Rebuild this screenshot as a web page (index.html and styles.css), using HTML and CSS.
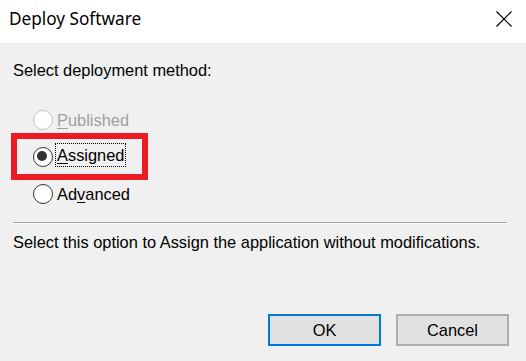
FILE: index.html
```html
<!DOCTYPE html>
<html lang="en">
<head>
<meta charset="utf-8">
<title>Deploy Software</title>
<link rel="stylesheet" href="styles.css">
</head>
<body>
<div class="dialog">
  <header class="titlebar">
    <span class="title">Deploy Software</span>
    <span class="close" aria-label="Close">
      <svg width="16" height="16" viewBox="0 0 16 16"><path d="M0.5 0.5 L15.5 15.5 M15.5 0.5 L0.5 15.5" stroke="#000" stroke-width="1.2" fill="none"/></svg>
    </span>
  </header>
  <main class="content">
    <p class="label">Select deployment method:</p>
    <div class="options">
      <label class="opt disabled"><span class="radio"></span><span class="text"><u>P</u>ublished</span></label>
      <label class="opt checked"><span class="radio"></span><span class="text focus"><u>A</u>ssigned</span><span class="highlight"></span></label>
      <label class="opt"><span class="radio"></span><span class="text">Ad<u>v</u>anced</span></label>
    </div>
    <div class="sep"></div>
    <p class="desc">Select this option to Assign the application without modifications.</p>
  </main>
  <footer class="buttons">
    <button class="btn default">OK</button>
    <button class="btn">Cancel</button>
  </footer>
</div>
</body>
</html>
```
FILE: styles.css
```css
html, body {
  margin: 0;
  padding: 0;
  background: #f0f0f0;
}
.dialog {
  width: 526px;
  height: 361px;
  display: flex;
  flex-direction: column;
  font-family: "Liberation Sans", Arial, sans-serif;
  font-size: 16.4px;
  color: #000;
  overflow: hidden;
}
.titlebar {
  height: 43px;
  background: #fff;
  display: flex;
  align-items: flex-start;
  justify-content: space-between;
  padding: 0 14px 0 9px;
  box-sizing: border-box;
}
.title {
  font-family: "Noto Sans", "Open Sans", sans-serif;
  font-size: 17.2px;
  line-height: 20px;
  margin-top: 9px;
  color: #000;
}
.close {
  margin-top: 11px;
  display: block;
  width: 16px;
  height: 16px;
}
.close svg { display: block; }
.content {
  padding: 0 19px 0 13px;
}
.label {
  margin: 17px 0 0;
  line-height: 20px;
}
.options {
  margin: 30px 0 0 20px;
  display: flex;
  flex-direction: column;
  gap: 17px;
}
.opt {
  position: relative;
  display: flex;
  align-items: center;
  height: 20px;
  line-height: 20px;
}
.radio {
  width: 20px;
  height: 20px;
  box-sizing: border-box;
  border: 1.6px solid #333;
  border-radius: 50%;
  background: #fff;
  position: relative;
  flex: none;
}
.checked .radio::after {
  content: "";
  position: absolute;
  left: 3.4px;
  top: 3.4px;
  width: 10px;
  height: 10px;
  border-radius: 50%;
  background: #333;
}
.disabled .radio {
  border-color: #c4c4c4;
}
.disabled .text {
  color: #a0a0a0;
}
.text {
  margin-left: 2px;
  padding: 0 1px;
  border: 1px solid transparent;
}
.text u {
  text-underline-offset: 2px;
}
.focus {
  border: 1px dotted #000;
  padding: 1px;
  margin-top: -4px;
  line-height: 20px;
}
.highlight {
  position: absolute;
  left: -22px;
  top: -14px;
  width: 137px;
  height: 47px;
  box-sizing: border-box;
  border: 6px solid #ed1c24;
  pointer-events: none;
}
.sep {
  margin-top: 18px;
  border-top: 1px solid #a0a0a0;
  border-bottom: 1px solid #fff;
}
.desc {
  margin: 8px 0 0;
  line-height: 20px;
}
.buttons {
  margin-top: auto;
  margin-bottom: 15px;
  display: flex;
  justify-content: flex-end;
  gap: 15px;
  padding-right: 17px;
}
.btn {
  width: 113px;
  height: 32px;
  box-sizing: border-box;
  background: #e1e1e1;
  border: 2px solid #adadad;
  font-family: "Liberation Sans", Arial, sans-serif;
  font-size: 16.4px;
  color: #000;
  padding: 0;
}
.btn.default {
  border-color: #0078d7;
}
```
